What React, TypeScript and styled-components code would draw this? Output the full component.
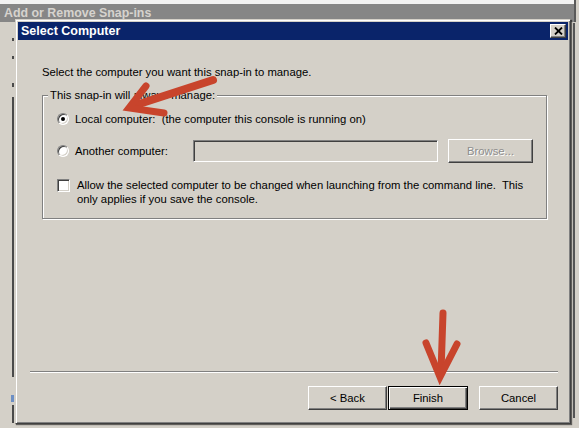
import React from "react";
import styled, { createGlobalStyle } from "styled-components";

const GlobalStyle = createGlobalStyle`
  html, body { margin: 0; padding: 0; }
  body {
    width: 579px;
    height: 428px;
    overflow: hidden;
    background: #d4d0c8;
    font-family: "Liberation Sans", Arial, sans-serif;
    font-size: 11.3px;
    color: #000;
  }
`;

const Screen = styled.div`
  position: relative;
  width: 579px;
  height: 428px;
  overflow: hidden;
  background: #d4d0c8;
  display: flex;
  flex-direction: column;
`;

const ParentTopEdge = styled.div`
  height: 4px;
  width: 576px;
  background: #f2f2f2;
  border-right: 2px solid #5a5a5a;
  box-sizing: border-box;
`;

const ParentTitle = styled.div`
  height: 18px;
  width: 576px;
  box-sizing: border-box;
  background: #868686;
  border-right: 2px solid #5a5a5a;
  color: #d6d3ce;
  font-weight: bold;
  font-size: 12.4px;
  line-height: 18px;
  padding-left: 4px;
  white-space: nowrap;
`;

const Desktop = styled.div`
  display: flex;
  margin-top: -3px;
  flex: 1;
`;

const LeftStrip = styled.div`
  width: 15px;
  display: flex;
  flex-direction: column;
  align-items: flex-end;
  padding-right: 1px;
  box-sizing: border-box;
`;

const Mark = styled.div<{ $mt: number; $h: number; $w?: number; $c?: string }>`
  margin-top: ${(p) => p.$mt}px;
  height: ${(p) => p.$h}px;
  width: ${(p) => p.$w ?? 2}px;
  background: ${(p) => p.$c ?? "#4a4a4a"};
`;

const RightStrip = styled.div`
  width: 8px;
  display: flex;
  flex-direction: column;
  padding-left: 2px;
  box-sizing: border-box;
`;

const Dialog = styled.div`
  width: 556px;
  height: 405px;
  box-sizing: border-box;
  background: #d4d0c8;
  border: 1px solid;
  border-color: #d4d0c8 #404040 #404040 #d4d0c8;
  box-shadow: inset 1px 1px 0 #fff, inset -1px -1px 0 #808080,
    1px 1px 1px rgba(0, 0, 0, 0.55);
  padding: 2px;
  display: flex;
  flex-direction: column;
`;

const TitleBar = styled.div`
  height: 18px;
  background: #0a246a;
  display: flex;
  align-items: center;
  justify-content: space-between;
  padding: 0 2px 0 3px;
`;

const TitleText = styled.span`
  color: #fff;
  font-weight: bold;
  font-size: 12.5px;
  white-space: nowrap;
`;

const CloseButton = styled.div`
  width: 16px;
  height: 14px;
  box-sizing: border-box;
  background: #d4d0c8;
  border: 1px solid;
  border-color: #fff #404040 #404040 #fff;
  box-shadow: inset -1px -1px 0 #808080;
  display: flex;
  align-items: center;
  justify-content: center;
`;

const Body = styled.div`
  flex: 1;
  display: flex;
  flex-direction: column;
`;

const Main = styled.div`
  padding: 26px 21px 0 24px;
  display: flex;
  flex-direction: column;
`;

const Instruction = styled.div`
  line-height: 13px;
  white-space: nowrap;
`;

const GroupBox = styled.div`
  position: relative;
  margin-top: 16px;
  height: 124px;
  box-sizing: border-box;
  border: 1px solid #808080;
  box-shadow: inset 1px 1px 0 #fff, 1px 1px 0 #fff;
  padding: 16px 0 0 14px;
  display: flex;
  flex-direction: column;
`;

const Legend = styled.span`
  position: absolute;
  top: -7px;
  left: 5px;
  padding: 0 2px;
  background: #d4d0c8;
  line-height: 13px;
  white-space: nowrap;
`;

const OptionRow = styled.div<{ $mt: number; $h: number }>`
  margin-top: ${(p) => p.$mt}px;
  height: ${(p) => p.$h}px;
  display: flex;
  align-items: center;
`;

const OptionLabel = styled.label<{ $w?: number }>`
  display: flex;
  align-items: center;
  gap: 6px;
  white-space: pre;
  ${(p) => (p.$w ? `width: ${p.$w}px;` : "")}
`;

const Radio = styled.span<{ $checked?: boolean }>`
  width: 12px;
  height: 12px;
  box-sizing: border-box;
  border-radius: 50%;
  background: #fff;
  border: 1px solid;
  border-color: #808080 #fff #fff #808080;
  box-shadow: inset 1px 1px 0 #404040, inset -1px -1px 0 #d4d0c8;
  display: flex;
  align-items: center;
  justify-content: center;
  flex: none;
  &::after {
    content: "";
    width: 4px;
    height: 4px;
    border-radius: 50%;
    background: ${(p) => (p.$checked ? "#000" : "transparent")};
  }
`;

const TextBox = styled.div`
  width: 245px;
  height: 22px;
  box-sizing: border-box;
  background: #d4d0c8;
  border: 1px solid;
  border-color: #808080 #fff #fff #808080;
  box-shadow: inset 1px 1px 0 #404040, inset -1px -1px 0 #d4d0c8;
`;

const Button = styled.div<{ $w: number; $default?: boolean; $disabled?: boolean }>`
  width: ${(p) => p.$w}px;
  height: 24px;
  box-sizing: border-box;
  background: #d4d0c8;
  border: 1px solid ${(p) => (p.$default ? "#000" : "transparent")};
  box-shadow: ${(p) =>
    p.$default
      ? "inset 1px 1px 0 #fff, inset -1px -1px 0 #404040, inset -2px -2px 0 #808080"
      : "none"};
  display: flex;
  align-items: center;
  justify-content: center;
  color: ${(p) => (p.$disabled ? "#8d8d8d" : "#000")};
  text-shadow: ${(p) => (p.$disabled ? "1px 1px 0 #fff" : "none")};
  white-space: nowrap;
  ${(p) =>
    p.$default
      ? ""
      : `border-color: #fff #404040 #404040 #fff; box-shadow: inset -1px -1px 0 #808080;`}
`;

const CheckRow = styled.div`
  margin-top: 15px;
  display: flex;
  align-items: flex-start;
  gap: 7px;
`;

const CheckBox = styled.span`
  margin-top: 1px;
  width: 13px;
  height: 13px;
  box-sizing: border-box;
  flex: none;
  background: #fff;
  border: 1px solid;
  border-color: #808080 #fff #fff #808080;
  box-shadow: inset 1px 1px 0 #404040, inset -1px -1px 0 #d4d0c8;
`;

const CheckText = styled.span`
  line-height: 14px;
  white-space: pre;
`;

const Spacer = styled.div`
  flex: 1;
`;

const Separator = styled.div`
  margin: 0 10px 0 12px;
  height: 1px;
  background: #808080;
  border-bottom: 1px solid #fff;
`;

const ButtonRow = styled.div`
  display: flex;
  justify-content: flex-end;
  padding: 13px 10px 11px 0;
`;

const ButtonGap = styled.div<{ $w: number }>`
  width: ${(p) => p.$w}px;
`;

const Annotations = styled.svg`
  position: absolute;
  left: 0;
  top: 0;
  pointer-events: none;
`;

const RED = "#c8442c";

export default function App() {
  return (
    <>
      <GlobalStyle />
      <Screen>
        <ParentTopEdge />
        <ParentTitle>Add or Remove Snap-ins</ParentTitle>
        <Desktop>
          <LeftStrip>
            <Mark $mt={19} $h={3} />
            <Mark $mt={15} $h={3} />
            <Mark $mt={24} $h={4} />
            <Mark $mt={10} $h={280} />
            <Mark $mt={18} $h={7} $w={3} $c="#6d8fc4" />
            <Mark $mt={3} $h={18} />
          </LeftStrip>
          <Dialog>
            <TitleBar>
              <TitleText>Select Computer</TitleText>
              <CloseButton>
                <svg width="9" height="8" viewBox="0 0 9 8">
                  <path d="M1 0.5 L8 7.5 M8 0.5 L1 7.5" stroke="#000" strokeWidth="1.8" />
                </svg>
              </CloseButton>
            </TitleBar>
            <Body>
              <Main>
                <Instruction>Select the computer you want this snap-in to manage.</Instruction>
                <GroupBox>
                  <Legend>This snap-in will always manage:</Legend>
                  <OptionRow $mt={1} $h={12}>
                    <OptionLabel>
                      <Radio $checked />
                      {"Local computer:  (the computer this console is running on)"}
                    </OptionLabel>
                  </OptionRow>
                  <OptionRow $mt={14} $h={24}>
                    <OptionLabel $w={136}>
                      <Radio />
                      Another computer:
                    </OptionLabel>
                    <TextBox />
                    <ButtonGap $w={10} />
                    <Button $w={85} $disabled>
                      Browse...
                    </Button>
                  </OptionRow>
                  <CheckRow>
                    <CheckBox />
                    <CheckText>
                      {"Allow the selected computer to be changed when launching from the command line.  This\nonly applies if you save the console."}
                    </CheckText>
                  </CheckRow>
                </GroupBox>
              </Main>
              <Spacer />
              <Separator />
              <ButtonRow>
                <Button $w={79}>&lt; Back</Button>
                <ButtonGap $w={1} />
                <Button $w={80} $default>
                  Finish
                </Button>
                <ButtonGap $w={11} />
                <Button $w={79}>Cancel</Button>
              </ButtonRow>
            </Body>
          </Dialog>
          <RightStrip>
            <Mark $mt={4} $h={395} $w={2} $c="#555" />
          </RightStrip>
        </Desktop>
        <Annotations width="579" height="428" viewBox="0 0 579 428">
          <path d="M213 80 L136 105" stroke={RED} strokeWidth="8" strokeLinecap="round" />
          <polyline
            points="146,86 129,108 164,113"
            fill="none"
            stroke={RED}
            strokeWidth="7"
            strokeLinejoin="miter"
            strokeLinecap="round"
          />
          <path d="M443 313 L441 372" stroke={RED} strokeWidth="7" strokeLinecap="round" />
          <polyline
            points="426,343 440,377 457,344"
            fill="none"
            stroke={RED}
            strokeWidth="7"
            strokeLinejoin="miter"
            strokeLinecap="round"
          />
        </Annotations>
      </Screen>
    </>
  );
}
